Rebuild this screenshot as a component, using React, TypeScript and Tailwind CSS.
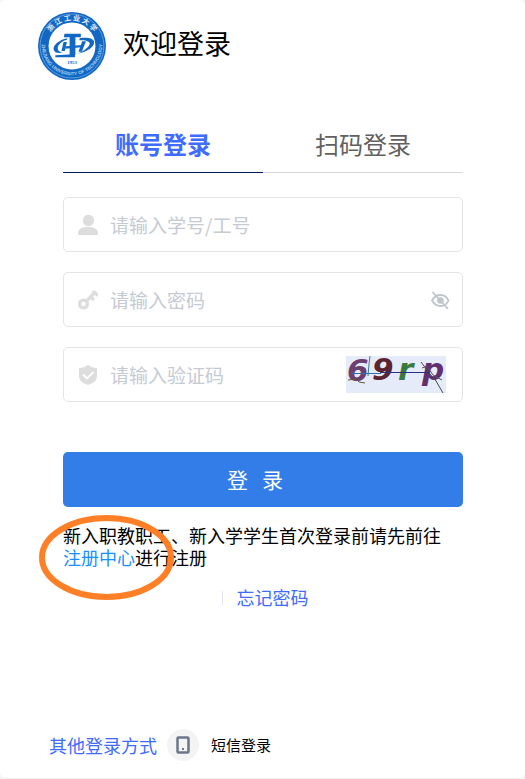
import { useState, type ReactNode } from "react";

function SchoolLogo() {
    return (
        <svg viewBox="0 0 200 200" className="size-[68px] shrink-0 overflow-visible" role="img" aria-label="校徽">
            <defs>
                <path id="ring-top" d="M 25 100 A 75 75 0 0 1 175 100" />
                <path id="ring-bottom" d="M 12 84 A 89 89 0 1 0 188 84" />
            </defs>
            <circle cx="100" cy="100" r="100" fill="#1168c4" />
            <circle cx="100" cy="100" r="94" fill="none" stroke="#7fb2e5" strokeWidth="2" />
            <circle cx="100" cy="100" r="69" fill="#fff" />
            <text fill="#e3effa" fontSize="21" fontWeight="700" textAnchor="middle" className="font-['Noto_Sans_CJK_SC',sans-serif]">
                <textPath href="#ring-top" startOffset="50%">浙 江 工 业 大 学</textPath>
            </text>
            <text fill="#a9cdf0" fontSize="14" fontWeight="700" textAnchor="middle" className="font-['Liberation_Sans',sans-serif]">
                <textPath href="#ring-bottom" startOffset="50%">ZHEJIANG UNIVERSITY OF TECHNOLOGY</textPath>
            </text>
            <g fill="#1168c4">
                <path d="M78 64h48v10H110v52h-1v7H51v-6l42-2V74H76z" />
                <path d="M86 77C62 82 44 97 46 110c2 10 14 12 28 9-9-1-16-5-16-12 0-10 11-21 28-26z" />
                <path d="M122 77c22-3 43 0 43 12 0 14-18 27-48 34 20-10 35-20 35-30 0-8-12-10-30-10z" />
                <path d="M75 88h10l-6 27H69zM130 86h11l-12 31h-10z" />
                <path d="M82 101l48-4-2 7-48 4z" />
            </g>
            <text x="100" y="152" fill="#1168c4" fontSize="14" fontWeight="700" textAnchor="middle" className="font-['Liberation_Serif',serif]">1953</text>
        </svg>
    );
}

function UserIcon() {
    return (
        <svg viewBox="0 0 20 20" className="size-5 shrink-0" fill="#dddddd" aria-hidden="true">
            <circle cx="10.500" cy="5.500" r="5.700" />
            <path d="M0 18.500C0 14 4 12 10 12s10 2 10 6.500c0 1-.5 1.500-1.500 1.500h-17C.5 20 0 19.500 0 18.500z" />
        </svg>
    );
}

function KeyIcon() {
    return (
        <svg viewBox="0 0 20 20" className="size-5 shrink-0" fill="none" stroke="#dddddd" aria-hidden="true">
            <circle cx="5.500" cy="14" r="3.900" strokeWidth="3.400" />
            <path d="M8.300 11.200L16 3.500" strokeWidth="3.400" />
            <path d="M14.500 2.500l1.500-.5 4 3.500M12 6.500l4 3.500" strokeWidth="3.200" strokeLinejoin="round" />
        </svg>
    );
}

function ShieldIcon() {
    return (
        <svg viewBox="0 0 20 20" className="size-5 shrink-0" aria-hidden="true">
            <path d="M10 0c2.500 2 5.500 2.900 9 3v8c0 4.500-4 7.500-9 9-5-1.500-9-4.500-9-9V3c3.500-.1 6.500-1 9-3z" fill="#dddddd" />
            <path d="M5 9.500l4 4L15.500 7" fill="none" stroke="#fff" strokeWidth="1.800" />
        </svg>
    );
}

function EyeOffIcon() {
    return (
        <svg viewBox="0 0 20 20" className="size-5" fill="none" stroke="#c0c4cc" strokeWidth="1.800" aria-hidden="true">
            <path d="M2 10.500C4 7 6.800 5 10.500 5s6.500 2 8 5.500c-1.500 3.500-4.300 5.500-8 5.500S4 14 2 10.500z" />
            <circle cx="10.500" cy="10.500" r="3.300" fill="#c0c4cc" stroke="none" />
            <path d="M2.500 2L18 19" />
        </svg>
    );
}

function Captcha() {
    return (
        <svg viewBox="0 0 100 37" className="h-[37px] w-[100px] overflow-visible" aria-hidden="true">
            <rect width="100" height="37" fill="#e6ebf9" />
            <g fontSize="31" fontWeight="700" fontStyle="italic" className="font-['DejaVu_Sans',sans-serif]">
                <text x="1" y="25" fill="#6b3f6e">6</text>
                <text x="26" y="24" fill="#5a2431">9</text>
                <text x="52" y="24" fill="#3a7a3c">r</text>
                <text x="76" y="24" fill="#5f2f70">p</text>
            </g>
            <g fill="none">
                <path d="M5 17.500h30" stroke="#2f6fa8" />
                <path d="M34 16.500h50" stroke="#2a2f86" />
                <path d="M24 0l-1 8-1 12" stroke="#3d7f8c" />
                <path d="M2 24l8-1 3 3 6 1" stroke="#5c5a3c" />
                <path d="M75 6l9 12 6 7 7 12" stroke="#3f4a52" />
                <path d="M76 12l5-2 6 9 9 5" stroke="#6b4a52" />
            </g>
        </svg>
    );
}

type FieldProps = {
    id: string;
    label: string;
    type?: string;
    icon: ReactNode;
    children?: ReactNode;
};

function Field({ id, label, type = "text", icon, children }: FieldProps) {
    return (
        <div className="flex h-[55px] items-center rounded-[5px] border border-[#e4e4e6] bg-white pl-3.5">
            <label htmlFor={id} aria-label={label}>{icon}</label>
            <input
                id={id}
                type={type}
                placeholder={label}
                className="ml-3 h-full min-w-0 flex-1 text-[19px] outline-none placeholder:text-[#c6cad3]"
            />
            {children}
        </div>
    );
}

export default function App() {
    const [tab, setTab] = useState("account");
    const [showPassword, setShowPassword] = useState(false);

    const tabClass = (name: string) =>
        tab === name
            ? "h-[57px] flex-1 border-b border-[#001a5c] text-2xl font-bold text-[#406bff]"
            : "h-[57px] flex-1 border-b border-[#d8d8d8] text-2xl text-[#606060]";

    return (
        <div className="bg-[#f5f5f5]">
            <main className="flex min-h-screen flex-col rounded-md border-b border-[#f0f0f0] bg-white font-['Noto_Sans_CJK_SC',sans-serif] text-black">
                <header className="flex items-start gap-[17px] pt-3 pl-[38px]">
                    <SchoolLogo />
                    <h1 className="text-[27px] leading-[62px]">欢迎登录</h1>
                </header>

                <div className="mt-9 pr-[62px] pl-[63px]">
                    <div role="tablist" className="flex">
                        <button type="button" role="tab" aria-selected={tab === "account"} className={tabClass("account")} onClick={() => setTab("account")}>
                            账号登录
                        </button>
                        <button type="button" role="tab" aria-selected={tab === "qrcode"} className={tabClass("qrcode")} onClick={() => setTab("qrcode")}>
                            扫码登录
                        </button>
                    </div>

                    <form className="mt-6" onSubmit={(e) => e.preventDefault()}>
                        <div className="flex flex-col gap-5">
                            <Field id="username" label="请输入学号/工号" icon={<UserIcon />} />
                            <Field id="password" label="请输入密码" type={showPassword ? "text" : "password"} icon={<KeyIcon />}>
                                <button type="button" aria-label="显示密码" className="mr-3" onClick={() => setShowPassword(!showPassword)}>
                                    <EyeOffIcon />
                                </button>
                            </Field>
                            <Field id="captcha" label="请输入验证码" icon={<ShieldIcon />}>
                                <button type="button" aria-label="刷新验证码" className="mr-4">
                                    <Captcha />
                                </button>
                            </Field>
                        </div>
                        <button type="submit" className="mt-[50px] flex h-[55px] w-full items-center justify-center gap-3.5 rounded-[5px] bg-[#327de8] pr-4 text-[21px] text-white">
                            <span>登</span>
                            <span>录</span>
                        </button>
                    </form>

                    <div className="relative mt-[17px]">
                        <p className="text-[18px] leading-[22px]">
                            新入职教职工、新入学学生首次登录前请先前往
                            <br />
                            <a href="#register" className="text-[#1890ff]">注册中心</a>进行注册
                        </p>
                        {/* marker round the register link */}
                        <svg viewBox="0 0 136 86" className="pointer-events-none absolute -top-2.5 -left-6 h-[86px] w-[136px]" aria-hidden="true">
                            <ellipse cx="67.500" cy="43.500" rx="64.500" ry="39.500" fill="none" stroke="#ff7f27" strokeWidth="6" />
                        </svg>
                    </div>

                    <div className="mt-4 flex items-center justify-center gap-3.5 pl-1 text-[18px]">
                        <span className="h-3.5 w-px bg-[#e3e5ee]" />
                        <a href="#forgot" className="text-[#406bff]">忘记密码</a>
                    </div>
                </div>

                <footer className="mt-auto flex items-center pb-[17px] pl-[49px]">
                    <span className="text-[18px] text-[#406bff]">其他登录方式</span>
                    <button type="button" className="ml-2.5 flex items-center gap-3 text-[15px]">
                        <span className="flex size-8 items-center justify-center rounded-full bg-[#f4f4f5]">
                            <svg viewBox="0 0 14 18" className="h-[18px] w-3.5" fill="none" stroke="#6b7689" strokeWidth="2.500" aria-hidden="true">
                                <rect x="1.500" y="1.500" width="11" height="15" rx="1" />
                                <path d="M6 13h2" strokeWidth="2" />
                            </svg>
                        </span>
                        短信登录
                    </button>
                </footer>
            </main>
        </div>
    );
}
